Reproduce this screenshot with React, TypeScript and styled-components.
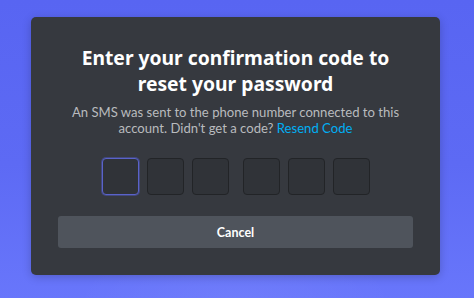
import React from "react";
import styled, { createGlobalStyle } from "styled-components";

const Global = createGlobalStyle`
  html, body { margin: 0; padding: 0; }
  body { width: 474px; height: 298px; overflow: hidden; font-family: Lato, "Open Sans", sans-serif; }
`;

const Page = styled.div`
  width: 474px;
  height: 298px;
  box-sizing: border-box;
  padding: 17px 0 0 31px;
  background:
    radial-gradient(ellipse 160px 60px at 235px 300px, rgba(255,255,255,0.05), rgba(255,255,255,0) 100%),
    linear-gradient(180deg, #5865f2 0%, #5d6af4 55%, #6876fb 100%);
  overflow: hidden;
`;

const Card = styled.div`
  width: 409px;
  height: 258px;
  box-sizing: border-box;
  background: #36393f;
  border-radius: 5px;
  box-shadow: 0 2px 10px rgba(0, 0, 0, 0.2);
  padding: 28px 20px 0;
  display: flex;
  flex-direction: column;
  align-items: center;
`;

const Title = styled.h1`
  margin: 0;
  font-family: "Noto Sans", "Open Sans", sans-serif;
  font-weight: 700;
  font-size: 19.3px;
  line-height: 26px;
  color: #ffffff;
  text-align: center;
`;

const Subtitle = styled.p`
  margin: 7px 0 0;
  font-family: Lato, "Open Sans", sans-serif;
  font-size: 13.1px;
  line-height: 16px;
  color: #b9bbbe;
  text-align: center;
  width: 340px;
`;

const Link = styled.a`
  color: #00aff4;
  text-decoration: none;
`;

const Codes = styled.div`
  display: flex;
  gap: 14px;
  margin-top: 22px;
`;

const Group = styled.div`
  display: flex;
  gap: 8px;
`;

const Digit = styled.div<{ $active?: boolean }>`
  width: 37px;
  height: 37px;
  box-sizing: border-box;
  border-radius: 4px;
  background: #303338;
  border: 1px solid ${(p) => (p.$active ? "#5a63c9" : "#222427")};
  box-shadow: ${(p) => (p.$active ? "0 0 0 1px rgba(88,101,242,0.35)" : "none")};
`;

const Button = styled.button`
  margin-top: 21px;
  width: 355px;
  height: 32px;
  border: none;
  border-radius: 3px;
  background: #4f545c;
  color: #ffffff;
  font-family: Lato, "Open Sans", sans-serif;
  font-weight: 700;
  font-size: 12.5px;
  cursor: pointer;
`;

export default function App() {
  return (
    <>
      <Global />
      <Page>
        <Card>
          <Title>
            Enter your confirmation code to
            <br />
            reset your password
          </Title>
          <Subtitle>
            An SMS was sent to the phone number connected to this account. Didn't get a code?{" "}
            <Link href="#">Resend Code</Link>
          </Subtitle>
          <Codes>
            <Group>
              <Digit $active />
              <Digit />
              <Digit />
            </Group>
            <Group>
              <Digit />
              <Digit />
              <Digit />
            </Group>
          </Codes>
          <Button>Cancel</Button>
        </Card>
      </Page>
    </>
  );
}
